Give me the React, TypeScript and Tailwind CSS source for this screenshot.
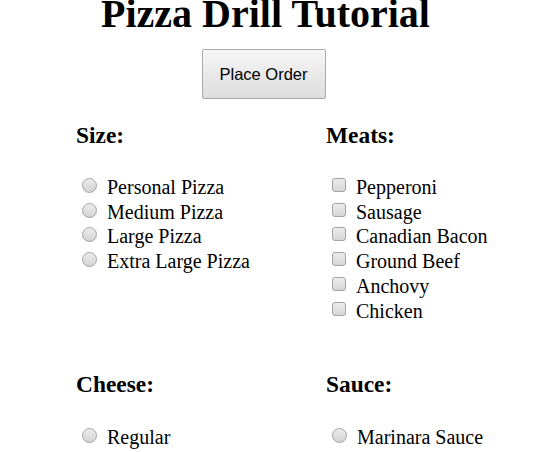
import React from 'react';

const sizes = ['Personal Pizza', 'Medium Pizza', 'Large Pizza', 'Extra Large Pizza'];
const meats = ['Pepperoni', 'Sausage', 'Canadian Bacon', 'Ground Beef', 'Anchovy', 'Chicken'];
const cheeses = ['Regular', 'No Cheese', 'Extra Cheese'];
const sauces = ['Marinara Sauce', 'White Sauce', 'Barbeque Sauce', 'No Sauce'];

const Radio: React.FC<{ label: string }> = ({ label }) => (
  <label className="flex h-[24.75px] items-start">
    <span className="mt-[3px] ml-[6px] h-[15px] w-[15px] rounded-full border border-[#a3a3a3] bg-gradient-to-b from-[#ececec] to-[#d3d3d3]" />
    <span className="ml-[10px] leading-[24px]">{label}</span>
  </label>
);

const Check: React.FC<{ label: string }> = ({ label }) => (
  <label className="flex h-[24.75px] items-start">
    <span className="mt-[3px] ml-[6px] h-[14px] w-[14px] rounded-[3px] border border-[#a3a3a3] bg-gradient-to-b from-[#ececec] to-[#d6d6d6]" />
    <span className="ml-[10px] leading-[24px]">{label}</span>
  </label>
);

const Section: React.FC<{ title: string; children: React.ReactNode }> = ({ title, children }) => (
  <div>
    <h3 className="text-[23.4px] font-bold leading-[27px]">{title}</h3>
    <div className="mt-[26.4px]">{children}</div>
  </div>
);

export default function App() {
  return (
    <div className="h-[452px] w-[549px] overflow-hidden bg-white text-black font-['Liberation_Serif','Times_New_Roman',serif] text-[20px]">
      <div className="flex w-[531px] flex-col items-center">
        <h1 className="-mt-[9.5px] text-[40px] font-bold leading-[46px]">Pizza Drill Tutorial</h1>
        <button className="mt-[12.5px] -ml-[4px] h-[50px] w-[124px] rounded-[2px] border border-[#a9a9a9] bg-gradient-to-b from-[#f6f6f6] to-[#dddddd] font-['Liberation_Sans',Arial,sans-serif] text-[16.5px] text-black">
          Place Order
        </button>
      </div>
      <div className="mt-[22.6px] grid grid-cols-[250px_250px] gap-y-[48px] pl-[76px]">
        <Section title="Size:">
          {sizes.map((s) => <Radio key={s} label={s} />)}
        </Section>
        <Section title="Meats:">
          {meats.map((m) => <Check key={m} label={m} />)}
        </Section>
        <Section title="Cheese:">
          {cheeses.map((c) => <Radio key={c} label={c} />)}
        </Section>
        <Section title="Sauce:">
          {sauces.map((s) => <Radio key={s} label={s} />)}
        </Section>
      </div>
    </div>
  );
}
